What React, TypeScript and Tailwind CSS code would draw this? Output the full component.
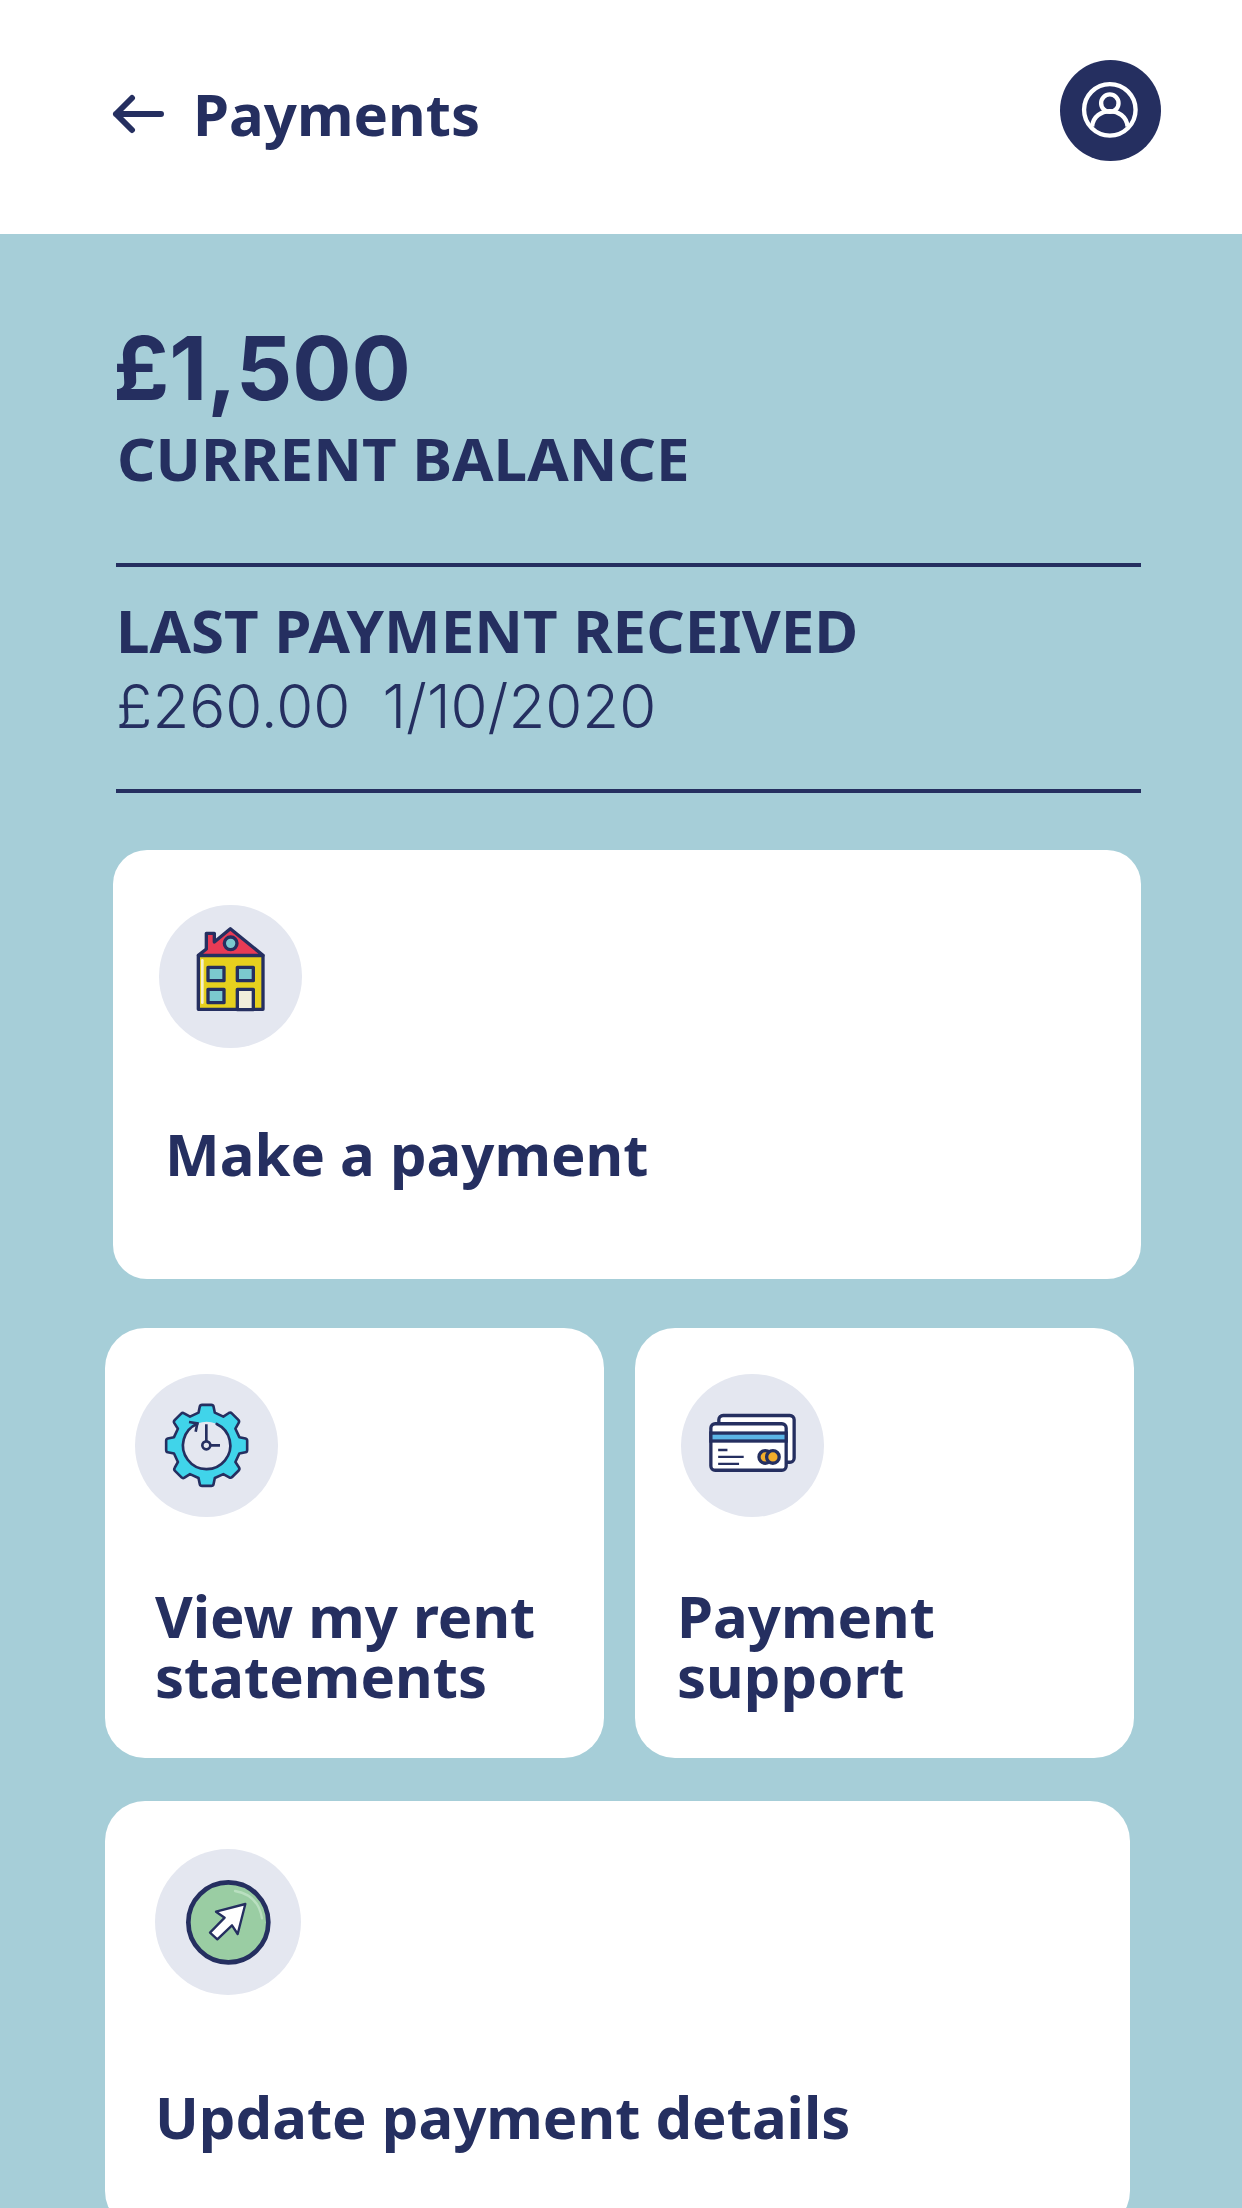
import type { ReactNode } from "react";

const NAVY = "#252f60";
const DISC = "#e4e7f0";

function HouseIcon() {
  return (
    <svg viewBox="28 45 429 429" className="size-full" aria-hidden="true" stroke={NAVY} strokeWidth="10" strokeLinejoin="round">
      <path d="M146 196 L170 177 V130 H194 V156 L242 116 L340 196 Z" fill="#e83b55" />
      <rect x="146" y="197" width="194" height="161" fill="#e6d01e" />
      <path d="M158 211 V338" stroke="#f5f0c8" strokeWidth="8" strokeLinecap="round" />
      <circle cx="243" cy="160" r="19" fill="#7bc9cf" />
      <rect x="175" y="232" width="48" height="40" fill="#7bc9cf" />
      <rect x="263" y="232" width="48" height="40" fill="#7bc9cf" />
      <rect x="175" y="298" width="48" height="40" fill="#7bc9cf" />
      <rect x="263" y="298" width="48" height="61" fill="#f1eedb" />
    </svg>
  );
}

function GearClockIcon() {
  return (
    <svg viewBox="45 42 429 429" className="size-full" aria-hidden="true" fill="none" stroke={NAVY} strokeWidth="8" strokeLinejoin="round">
      <g transform="translate(260 256)">
        <path
          fill="#40d4ea"
          transform="scale(0.98)"
          d="M-14 -124 L14 -124 Q20 -124 21 -119 L25 -100 L51 -88 L68 -99 Q73 -102 77 -98 L97 -78 Q101 -74 98 -69 L88 -51 L100 -25 L119 -21 Q124 -20 124 -14 L124 14 Q124 20 119 21 L100 25 L88 51 L99 68 Q102 73 98 77 L78 97 Q74 101 69 98 L51 88 L25 100 L21 119 Q20 124 14 124 L-14 124 Q-20 124 -21 119 L-25 100 L-51 88 L-68 99 Q-73 102 -77 98 L-97 78 Q-101 74 -98 69 L-88 51 L-100 25 L-119 21 Q-124 20 -124 14 L-124 -14 Q-124 -20 -119 -21 L-100 -25 L-88 -51 L-99 -68 Q-102 -73 -98 -77 L-78 -97 Q-74 -101 -69 -98 L-51 -88 L-25 -100 L-21 -119 Q-20 -124 -14 -124 Z"
        />
        <circle r="71" fill={DISC} stroke="none" />
        <path d="M30 -64 A71 71 0 1 1 -28 -65" strokeLinecap="round" />
        <path d="M-53 -70 L-28 -66 L-33 -41" strokeLinejoin="miter" />
        <path d="M-1 -63 V-13 M12 0 H40" />
        <circle cx="-1" r="12" />
      </g>
    </svg>
  );
}

function BankCardsIcon() {
  return (
    <svg viewBox="34 39 431 431" className="size-full" aria-hidden="true" fill="#fff" stroke={NAVY} strokeWidth="10">
      <rect x="148" y="164" width="227" height="141" rx="13" />
      <rect x="124" y="189" width="227" height="140" rx="13" />
      <rect x="124" y="217" width="227" height="24" fill="#5cb5e6" />
      <path d="M146 268 H174 M146 289 H223 M146 310 H209" strokeWidth="7" />
      <circle cx="288" cy="289" r="19" fill="#f3ad2b" />
      <circle cx="311" cy="289" r="19" fill="#f3ad2b" />
    </svg>
  );
}

function CursorIcon() {
  return (
    <svg viewBox="45 57 438 438" className="size-full" aria-hidden="true" stroke={NAVY} strokeLinejoin="round">
      <circle cx="265" cy="277" r="120" fill="#9acda3" strokeWidth="14" />
      <path d="M285 183 Q355 195 366 265" fill="none" stroke="#b9dfc0" strokeWidth="7" strokeLinecap="round" />
      <path d="M316 222 L228 245 L254 263 L210 308 L232 328 L276 286 L293 312 Z" fill="#fff" strokeWidth="7" />
    </svg>
  );
}

function UserIcon() {
  return (
    <svg viewBox="90 60 302 302" className="size-full" aria-hidden="true" fill="none" stroke="#fff" strokeWidth="13">
      <circle cx="239" cy="209" r="77" />
      <circle cx="239" cy="189" r="26" />
      <path d="M186 259 C192 198 286 198 292 259" />
    </svg>
  );
}

function BackArrow() {
  return (
    <svg viewBox="0 0 52 40" className="h-10 w-13" aria-hidden="true" fill="none" stroke={NAVY} strokeWidth="6" strokeLinecap="round" strokeLinejoin="round">
      <path d="M49 20 H4 M20 4 L4 20 L20 36" />
    </svg>
  );
}

type CardProps = { icon: ReactNode; title: string; card: string; disc: string; label: string };

function ActionCard({ icon, title, card, disc, label }: CardProps) {
  return (
    <button type="button" className={`flex flex-col items-start bg-white text-left ${card}`}>
      <span className={`shrink-0 overflow-hidden rounded-full bg-[#e4e7f0] ${disc}`}>{icon}</span>
      <span className={`text-[58px] leading-[60px] font-bold ${label}`}>{title}</span>
    </button>
  );
}

export default function App() {
  return (
    <div className="min-h-screen bg-[#a6ced8] font-['Noto_Sans',sans-serif] text-[#252f60]">
      <header className="flex items-center justify-between bg-white pt-15 pr-[81px] pb-[73px] pl-28">
        <div className="flex items-center gap-[29px] pt-1.5">
          <button type="button" aria-label="Back">
            <BackArrow />
          </button>
          <h1 className="text-[58px] leading-[60px] font-bold">Payments</h1>
        </div>
        <button type="button" aria-label="Account" className="size-[101px] rounded-full bg-[#252f60]">
          <UserIcon />
        </button>
      </header>

      <main className="pt-[89px] pr-[101px] pb-12 pl-[105px]">
        <section className="pl-2">
          <p className="font-['Inter',sans-serif] text-[88px] leading-[90px] font-bold">£1,500</p>
          <h2 className="mt-[15px] pl-1 text-[60px] leading-[60px] font-bold">CURRENT BALANCE</h2>
        </section>

        <section className="mt-[75px] ml-[11px] border-y-4 border-[#252f60] pt-[33px] pb-[53px]">
          <h2 className="text-[60px] leading-[60px] font-bold">LAST PAYMENT RECEIVED</h2>
          <p className="mt-4 flex gap-8 font-['Inter',sans-serif] text-[60px] leading-[60px] font-light">
            <span>£260.00</span>
            <span>1/10/2020</span>
          </p>
        </section>

        <nav aria-label="Payment actions" className="mt-[57px] flex flex-col">
          <ActionCard
            icon={<HouseIcon />}
            title="Make a payment"
            card="ml-2 rounded-[34px] pt-[55px] pb-[95px]"
            disc="ml-[46px] size-[143px]"
            label="mt-[76px] ml-[52px]"
          />
          <div className="mt-[49px] mr-[7px] grid grid-cols-2 gap-[31px]">
            <ActionCard
              icon={<GearClockIcon />}
              title="View my rent statements"
              card="rounded-[40px] pt-[46px] pb-[52px]"
              disc="ml-[30px] size-[143px]"
              label="mt-[69px] ml-[50px]"
            />
            <ActionCard
              icon={<BankCardsIcon />}
              title="Payment support"
              card="rounded-[40px] pt-[46px] pb-[52px]"
              disc="ml-[46px] size-[143px]"
              label="mt-[69px] ml-[42px] max-w-80"
            />
          </div>
          <ActionCard
            icon={<CursorIcon />}
            title="Update payment details"
            card="mt-[43px] mr-[11px] rounded-[40px] pt-12 pb-[84px]"
            disc="ml-[50px] size-[146px]"
            label="mt-[92px] ml-[50px]"
          />
        </nav>
      </main>
    </div>
  );
}
